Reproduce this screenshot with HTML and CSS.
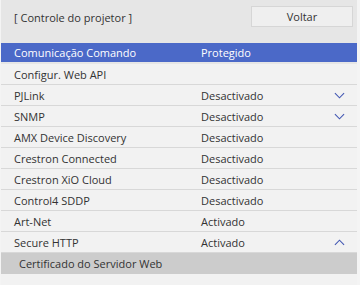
FILE: index.html
```html
<!DOCTYPE html>
<html>

<head>
    <title>Controle do projetor</title>
    <link rel="stylesheet" href="styles.css">
</head>

<body>
    <div class="panel">
        <!-- header -->
        <div class="header">
            <span class="title">[ Controle do projetor ]</span>
            <button class="back">Voltar</button>
        </div>

        <!-- menu -->
        <div class="menu">
            <div class="row selected"><span class="name">Comunicação Comando</span><span class="value">Protegido</span></div>
            <div class="row"><span class="name">Configur. Web API</span><span class="value"></span></div>
            <div class="row"><span class="name">PJLink</span><span class="value">Desactivado</span>
                <svg class="chev" viewBox="0 0 12 7"><path d="M1 1 L6 6 L11 1" /></svg></div>
            <div class="row"><span class="name">SNMP</span><span class="value">Desactivado</span>
                <svg class="chev" viewBox="0 0 12 7"><path d="M1 1 L6 6 L11 1" /></svg></div>
            <div class="row"><span class="name">AMX Device Discovery</span><span class="value">Desactivado</span></div>
            <div class="row"><span class="name">Crestron Connected</span><span class="value">Desactivado</span></div>
            <div class="row"><span class="name">Crestron XiO Cloud</span><span class="value">Desactivado</span></div>
            <div class="row"><span class="name">Control4 SDDP</span><span class="value">Desactivado</span></div>
            <div class="row"><span class="name">Art-Net</span><span class="value">Activado</span></div>
            <div class="row"><span class="name">Secure HTTP</span><span class="value">Activado</span>
                <svg class="chev" viewBox="0 0 12 7"><path d="M1 6 L6 1 L11 6" /></svg></div>
            <div class="row sub"><span class="name">Certificado do Servidor Web</span></div>
            <div class="row"></div>
        </div>
    </div>
</body>

</html>
```

FILE: styles.css
```css
* {
    margin: 0;
    padding: 0;
    box-sizing: border-box;
}

body {
    width: 360px;
    height: 285px;
    overflow: hidden;
    background-color: #f4f4f4;
    font-family: "Open Sans", sans-serif;
    font-size: 11px;
    color: #333;
}

.panel {
    padding: 0 3px 0 1px;
}

.header {
    height: 43px;
    display: flex;
    align-items: flex-start;
    justify-content: space-between;
    background-color: #e6e6e6;
}

.title {
    margin: 10px 0 0 13px;
    font-size: 11px;
}

.back {
    margin: 6px 4px 0 0;
    width: 102px;
    height: 21px;
    background-color: #efefef;
    border: 1px solid #d6d6d6;
    font-family: "Open Sans", sans-serif;
    font-size: 11px;
    color: #333;
}

.row {
    height: 21px;
    display: flex;
    align-items: center;
    background-color: #f2f2f2;
    border-bottom: 1px solid #d8d8d8;
    padding-left: 13px;
}

.row .name {
    width: 187px;
}

.row .value {
    flex: 1;
}

.selected {
    background-color: #4b69c8;
    color: #fff;
    border-bottom: 2px solid #e6e6e6;
}

.sub {
    background-color: #cccccc;
    padding-left: 18px;
    border-bottom: none;
}

.chev {
    width: 11px;
    height: 7px;
    margin-right: 12px;
}

.chev path {
    fill: none;
    stroke: #4257b3;
    stroke-width: 1.2;
}
```
